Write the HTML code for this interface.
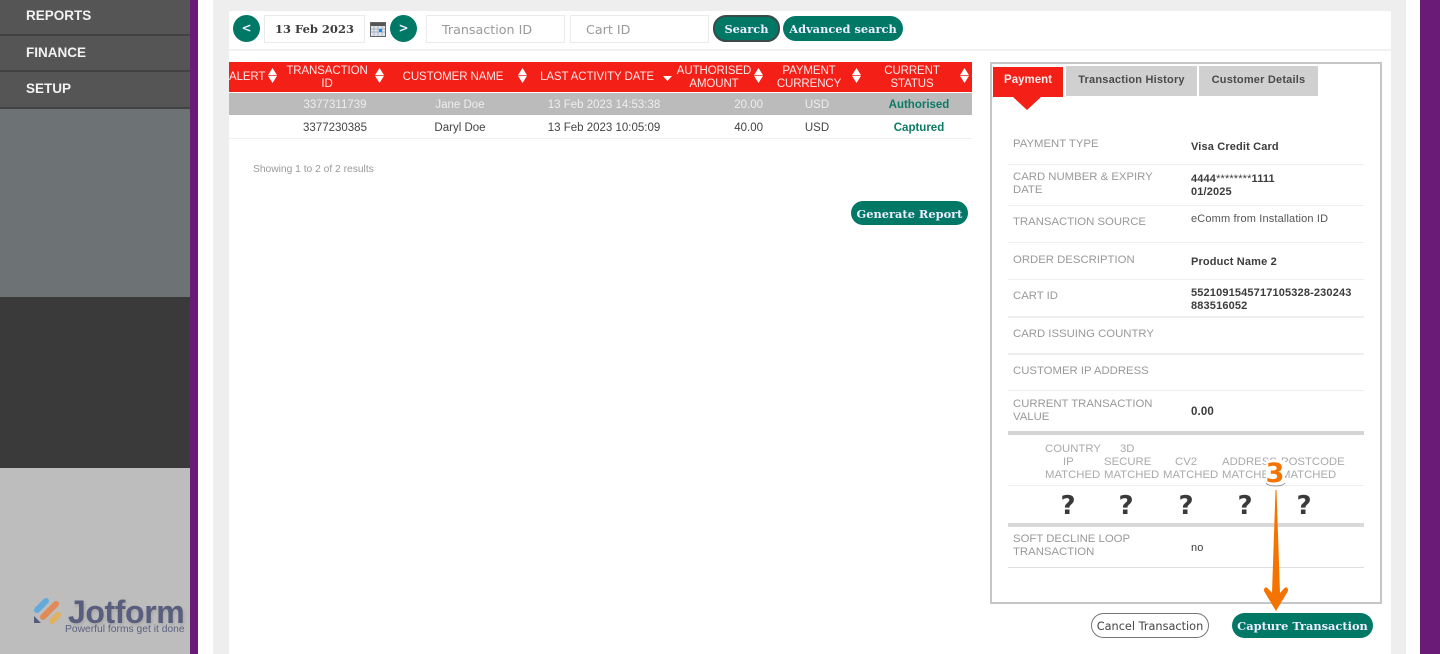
<!DOCTYPE html>
<html><head><meta charset="utf-8"><title>Transactions</title>
<style>
html,body{margin:0;padding:0;width:1440px;height:654px;overflow:hidden;background:#fff}
body{position:relative;font-family:"Liberation Sans",sans-serif;color:#444}
#w{position:absolute;left:0;top:0;width:1440px;height:654px;overflow:hidden;filter:blur(.3px)}
.a{position:absolute}
.t{position:absolute;white-space:nowrap;line-height:13px}
.nav{position:absolute;left:0;width:190px;background:#555;border-bottom:2px solid #424242;box-sizing:border-box}
.nav span{position:absolute;left:26px;color:#f2f2f2;font-weight:bold;font-size:13.5px;line-height:16px}
.btn{position:absolute;background:#007866;color:#eef;font:bold 11.4px/20px "DejaVu Serif",serif;text-align:center;border-radius:13px;white-space:nowrap;box-sizing:border-box}
.inp{position:absolute;border:1px solid #eaeaea;box-sizing:border-box;background:#fff;color:#999;font:12.7px/27px "DejaVu Sans",sans-serif;white-space:nowrap}
.th{position:absolute;color:#fdeaea;font-size:11.5px;line-height:13px;text-align:center;white-space:nowrap;letter-spacing:-.1px}
.sort{position:absolute;top:68px;width:9px;height:15px}
.td{position:absolute;font-size:11.5px;line-height:13px;text-align:center;white-space:nowrap}
.l{position:absolute;left:1013px;color:#999;font-size:11.35px;line-height:13px;white-space:nowrap;margin-top:1px}
.v{position:absolute;left:1191px;color:#3c3c3c;font-size:11px;line-height:13px;font-weight:bold;white-space:nowrap;letter-spacing:.15px}
.hr{position:absolute;left:1008px;width:356px;height:1px;background:#eee}
.m{position:absolute;color:#aaa;font-size:11.35px;line-height:13px;white-space:nowrap;margin-top:1px}
.q{position:absolute;top:490px;color:#3a3a3a;font:bold 26px/32px "DejaVu Sans",sans-serif;text-align:center;width:30px}
</style></head><body><div id="w">

<div class="a" style="left:0;top:0;width:190px;height:109px;background:#555"></div>
<div class="nav" style="top:0;height:36px"><span style="top:8px">REPORTS</span></div>
<div class="nav" style="top:36px;height:36px"><span style="top:9px">FINANCE</span></div>
<div class="nav" style="top:72px;height:37px"><span style="top:9px">SETUP</span></div>
<div class="a" style="left:0;top:109px;width:190px;height:188px;background:#6d7274"></div>
<div class="a" style="left:0;top:297px;width:190px;height:171px;background:#3a3a3a"></div>
<div class="a" style="left:0;top:468px;width:190px;height:186px;background:#bdbdbd"></div>
<div class="a" style="left:190px;top:0;width:8px;height:654px;background:#6a1b78"></div>
<div class="a" style="left:213px;top:0;width:16px;height:654px;background:#eee"></div>
<div class="a" style="left:229px;top:0;width:1162px;height:11px;background:#eee"></div>
<div class="a" style="left:1391px;top:0;width:15px;height:654px;background:#eee"></div>
<div class="a" style="left:1420px;top:0;width:20px;height:654px;background:#6a1b78"></div>

<svg class="a" style="left:33px;top:596px" width="36" height="32" viewBox="0 0 36 32">
<path d="M4 14 L13 5" stroke="#62a9dc" stroke-width="6" stroke-linecap="round"/>
<path d="M10 21 L23 8" stroke="#df8a57" stroke-width="6" stroke-linecap="round"/>
<path d="M19 25 L25 19" stroke="#e0b25f" stroke-width="6" stroke-linecap="round"/>
<path d="M1 20 L1 27 L8 27 Z" fill="#55597a"/>
</svg>
<div class="t" style="left:68px;top:596px;font-size:32px;line-height:33px;font-weight:bold;color:#5a5e7e;letter-spacing:-.4px;text-shadow:1px 2px 3px rgba(0,0,0,.12)">Jotform</div>
<div class="t" style="left:65px;top:623px;font-size:10.3px;color:#5d6180">Powerful forms get it done</div>

<div class="a" style="left:229px;top:49px;width:1162px;height:2px;background:#f1f1f1"></div>
<div class="btn" style="left:233px;top:15px;width:27px;height:27px;border-radius:50%;font:bold 12px/27px 'DejaVu Sans',sans-serif">&lt;</div>
<div class="inp" style="left:264px;top:15px;width:101px;height:28px;color:#3c3c3c;font:bold 11.5px/27px 'DejaVu Serif',serif;text-align:center">13 Feb 2023</div>
<svg class="a" style="left:370px;top:22px" width="16" height="15" viewBox="0 0 16 15"><rect x=".5" y=".5" width="15" height="14" fill="#dfe6ee" stroke="#666"/><rect x="1" y="1" width="14" height="3" fill="#555"/><path d="M1 7h14M1 10h14M4 4v10M8 4v10M12 4v10" stroke="#9aa6b5" stroke-width=".7"/><rect x="9" y="7" width="3" height="3" fill="#1e88e5"/></svg>
<div class="btn" style="left:390px;top:15px;width:27px;height:27px;border-radius:50%;font:bold 12px/27px 'DejaVu Sans',sans-serif">&gt;</div>
<div class="inp" style="left:426px;top:15px;width:139px;height:28px;padding-left:15px">Transaction ID</div>
<div class="inp" style="left:570px;top:15px;width:139px;height:28px;padding-left:15px">Cart ID</div>
<div class="btn" style="left:713px;top:15px;width:67px;height:27px;border:2px solid #3a4a48;line-height:25px">Search</div>
<div class="btn" style="left:783px;top:16px;width:120px;height:25px;line-height:27px">Advanced search</div>

<div class="a" style="left:229px;top:62px;width:743px;height:30px;background:#f41f16"></div>
<div class="th" style="left:229px;top:71px">ALERT</div>
<div class="th" style="left:282px;top:65px;width:90px">TRANSACTION<br>ID</div>
<div class="th" style="left:400px;top:71px;width:106px">CUSTOMER NAME</div>
<div class="th" style="left:537px;top:71px;width:120px">LAST ACTIVITY DATE</div>
<div class="th" style="left:674px;top:65px;width:80px">AUTHORISED<br>AMOUNT</div>
<div class="th" style="left:774px;top:65px;width:70px">PAYMENT<br>CURRENCY</div>
<div class="th" style="left:877px;top:65px;width:70px">CURRENT<br>STATUS</div>
<svg class="sort" style="left:268px" viewBox="0 0 9 15"><path d="M4.5 0 9 7.1H0ZM4.5 15 9 7.9H0Z" fill="#fff"/></svg>
<svg class="sort" style="left:375px" viewBox="0 0 9 15"><path d="M4.5 0 9 7.1H0ZM4.5 15 9 7.9H0Z" fill="#fff"/></svg>
<svg class="sort" style="left:518px" viewBox="0 0 9 15"><path d="M4.5 0 9 7.1H0ZM4.5 15 9 7.9H0Z" fill="#fff"/></svg>
<svg class="a" style="left:662px;top:75px" width="11" height="7" viewBox="0 0 11 7"><path d="M1 1H10L5.5 6Z" fill="#fff"/></svg>
<svg class="sort" style="left:754px" viewBox="0 0 9 15"><path d="M4.5 0 9 7.1H0ZM4.5 15 9 7.9H0Z" fill="#fff"/></svg>
<svg class="sort" style="left:852px" viewBox="0 0 9 15"><path d="M4.5 0 9 7.1H0ZM4.5 15 9 7.9H0Z" fill="#fff"/></svg>
<svg class="sort" style="left:960px" viewBox="0 0 9 15"><path d="M4.5 0 9 7.1H0ZM4.5 15 9 7.9H0Z" fill="#fff"/></svg>

<div class="a" style="left:229px;top:93px;width:743px;height:22px;background:#bbb"></div>
<div class="a" style="left:229px;top:138px;width:743px;height:1px;background:#eee"></div>
<div class="td" style="left:285px;top:99px;width:100px;color:#eee">3377311739</div>
<div class="td" style="left:410px;top:99px;width:100px;color:#eee">Jane Doe</div>
<div class="td" style="left:539px;top:99px;width:130px;color:#eee">13 Feb 2023 14:53:38</div>
<div class="td" style="left:723px;top:99px;width:40px;text-align:right;color:#eee">20.00</div>
<div class="td" style="left:797px;top:99px;width:40px;color:#eee">USD</div>
<div class="td" style="left:879px;top:99px;width:80px;color:#0d7a66;font-weight:bold">Authorised</div>
<div class="td" style="left:285px;top:122px;width:100px">3377230385</div>
<div class="td" style="left:410px;top:122px;width:100px">Daryl Doe</div>
<div class="td" style="left:539px;top:122px;width:130px">13 Feb 2023 10:05:09</div>
<div class="td" style="left:723px;top:122px;width:40px;text-align:right">40.00</div>
<div class="td" style="left:797px;top:122px;width:40px">USD</div>
<div class="td" style="left:879px;top:122px;width:80px;color:#0d7a66;font-weight:bold">Captured</div>

<div class="t" style="left:253px;top:163px;font-size:10.25px;color:#999">Showing 1 to 2 of 2 results</div>
<div class="btn" style="left:851px;top:201px;width:117px;height:24px;line-height:26px">Generate Report</div>

<div class="a" style="left:990px;top:62px;width:392px;height:542px;border:2px solid #c6c6c6;box-sizing:border-box"></div>
<div class="a" style="left:993px;top:67px;width:70px;height:30px;background:#f41f16;color:#fdeaea;font-weight:bold;font-size:11.5px;line-height:27px;text-align:center">Payment</div>
<div class="a" style="left:1013px;top:97px;width:0;height:0;border-left:14px solid transparent;border-right:14px solid transparent;border-top:13px solid #f41f16"></div>
<div class="a" style="left:1066px;top:66px;width:131px;height:30px;background:#d0d0d0;color:#4a4a4a;font-weight:bold;font-size:11px;letter-spacing:.2px;line-height:28px;text-align:center">Transaction History</div>
<div class="a" style="left:1199px;top:66px;width:119px;height:30px;background:#d0d0d0;color:#4a4a4a;font-weight:bold;font-size:11px;letter-spacing:.2px;line-height:28px;text-align:center">Customer Details</div>

<div class="l" style="top:137px">PAYMENT TYPE</div>
<div class="v" style="top:141px">Visa Credit Card</div>
<div class="hr" style="top:164px"></div>
<div class="l" style="top:170px">CARD NUMBER &amp; EXPIRY<br>DATE</div>
<div class="v" style="top:173px">4444<span style="font-weight:normal">********</span>1111<br>01/2025</div>
<div class="hr" style="top:205px"></div>
<div class="l" style="top:215px">TRANSACTION SOURCE</div>
<div class="v" style="top:213px;font-weight:normal;color:#555">eComm from Installation ID</div>
<div class="hr" style="top:242px"></div>
<div class="l" style="top:253px">ORDER DESCRIPTION</div>
<div class="v" style="top:256px">Product Name 2</div>
<div class="hr" style="top:279px"></div>
<div class="l" style="top:289px">CART ID</div>
<div class="v" style="top:287px">5521091545717105328-230243<br>883516052</div>
<div class="hr" style="top:316px;height:2px"></div>
<div class="l" style="top:327px">CARD ISSUING COUNTRY</div>
<div class="hr" style="top:353px;height:2px"></div>
<div class="l" style="top:364px">CUSTOMER IP ADDRESS</div>
<div class="hr" style="top:390px"></div>
<div class="l" style="top:397px">CURRENT TRANSACTION<br>VALUE</div>
<div class="v" style="top:406px;font-size:11.5px">0.00</div>
<div class="a" style="left:1008px;top:431px;width:356px;height:4px;background:#d4d4d4"></div>

<div class="m" style="left:1045px;top:442px">COUNTRY</div>
<div class="m" style="left:1063px;top:455px">IP</div>
<div class="m" style="left:1045px;top:468px">MATCHED</div>
<div class="m" style="left:1120px;top:442px">3D</div>
<div class="m" style="left:1104px;top:455px">SECURE</div>
<div class="m" style="left:1104px;top:468px">MATCHED</div>
<div class="m" style="left:1175px;top:455px">CV2</div>
<div class="m" style="left:1163px;top:468px">MATCHED</div>
<div class="m" style="left:1222px;top:455px">ADDRESS</div>
<div class="m" style="left:1222px;top:468px">MATCHED</div>
<div class="m" style="left:1281px;top:455px">POSTCODE</div>
<div class="m" style="left:1281px;top:468px">MATCHED</div>
<div class="hr" style="top:485px"></div>
<div class="q" style="left:1053px">?</div>
<div class="q" style="left:1111px">?</div>
<div class="q" style="left:1171px">?</div>
<div class="q" style="left:1230px">?</div>
<div class="q" style="left:1289px">?</div>
<div class="a" style="left:1008px;top:523px;width:356px;height:4px;background:#d9d9d9"></div>
<div class="l" style="top:532px">SOFT DECLINE LOOP<br>TRANSACTION</div>
<div class="v" style="top:542px;font-weight:normal">no</div>
<div class="hr" style="top:567px;background:#ddd"></div>

<div class="a" style="left:1091px;top:613px;width:118px;height:25px;border:1px solid #777;border-radius:13px;box-sizing:border-box;background:#fff;color:#444;font:11.3px/25px 'DejaVu Sans',sans-serif;text-align:center;white-space:nowrap">Cancel Transaction</div>
<div class="btn" style="left:1232px;top:613px;width:141px;height:25px;line-height:27px">Capture Transaction</div>

<div class="a" style="left:1266px;top:460px;width:19px;height:25px;background:#fff;border-radius:0 0 9px 9px"></div>
<svg class="a" style="left:1255px;top:455px" width="40" height="160" viewBox="0 0 40 160">
<path d="M11 28C14 32 27 32 30 28" fill="none" stroke="#888" stroke-width=".8"/>
<path d="M20.5 35 L17 138 L12.5 133 Q9 131 9 136 L21 156 L33 136 Q33 131 29.5 133 L25 138 L21.5 35 Z" fill="#f57300"/>
</svg>
<div class="t" style="left:1265px;top:458px;width:20px;text-align:center;font:bold 27px/32px 'DejaVu Sans',sans-serif;color:#f57300">3</div>
</div></body></html>
